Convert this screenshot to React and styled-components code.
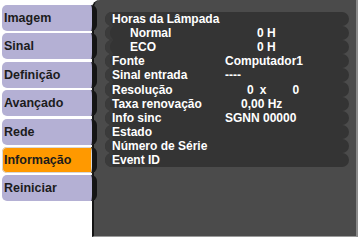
import React from 'react'
import styled, {createGlobalStyle} from 'styled-components'

const GlobalStyle = createGlobalStyle`
  html, body {
    margin: 0;
    padding: 0;
    background: #ffffff;
  }
  body {
    font-family: "Liberation Sans", Arial, sans-serif;
  }
`

const tabs = ['Imagem', 'Sinal', 'Definição', 'Avançado', 'Rede', 'Informação', 'Reiniciar']

const rows = [
  {label: 'Horas da Lâmpada'},
  {label: 'Normal', sub: true, value: '0 H', pad: 32},
  {label: 'ECO', sub: true, value: '0 H', pad: 32},
  {label: 'Fonte', value: 'Computador1'},
  {label: 'Sinal entrada', value: '----'},
  {label: 'Resolução', res: true},
  {label: 'Taxa renovação', value: '0,00 Hz', pad: 16},
  {label: 'Info sinc', value: 'SGNN 00000'},
  {label: 'Estado'},
  {label: 'Número de Série'},
  {label: 'Event ID'},
]

export default function App(){
  return(
    <Screen>
      <GlobalStyle/>
      <TabColumn>
        {tabs.map(t => (
          <Tab key={t} active={t === 'Informação'}>{t}</Tab>
        ))}
      </TabColumn>
      <Panel>
        <InfoList>
          {rows.map(r => (
            <InfoRow key={r.label}>
              <Label sub={r.sub}>{r.label}</Label>
              {r.res ? (
                <Value>
                  <ResPart gap={22}>0</ResPart>
                  <ResPart gap={6}>x</ResPart>
                  <ResPart gap={26}>0</ResPart>
                </Value>
              ) : (
                <Value pad={r.pad}>{r.value}</Value>
              )}
            </InfoRow>
          ))}
        </InfoList>
      </Panel>
    </Screen>
  )
}

const Screen = styled.div`
  display: flex;
  width: 360px;
  height: 240px;
  background: #ffffff;
`

const TabColumn = styled.div`
  display: flex;
  flex-direction: column;
  gap: 2.4px;
  width: 95px;
  padding: 5px 0 0 2px;
  margin-right: -5px;
  position: relative;
  z-index: 1;
`

const Tab = styled.div`
  height: 26px;
  box-sizing: border-box;
  display: flex;
  align-items: center;
  padding-left: 2px;
  font-size: 12.5px;
  font-weight: bold;
  color: #1c1c1c;
  background: ${p => p.active ? '#ff9900' : '#b4b0d4'};
  border-radius: 5px 6px 6px 5px;
  border-right: 5px solid #151515;
  box-shadow: ${p => p.active ? 'inset 0 0 0 1px #d8d8d8' : 'none'};
`

const Panel = styled.div`
  width: 266px;
  height: 237px;
  box-sizing: border-box;
  background: #4b4b4b;
  border-left: 2px solid #141414;
  border-right: 2px solid #8a8a8a;
  border-bottom: 1px solid #9a9a9a;
  border-radius: 8px 0 0 0;
  padding: 12px 7px 0 11px;
`

const InfoList = styled.div`
  display: flex;
  flex-direction: column;
`

const InfoRow = styled.div`
  display: flex;
  align-items: center;
  height: 14.1px;
  background: #343434;
  border-radius: 7px;
  box-shadow: inset 7px 0 0 -2px #3b3b3b;
`

const Label = styled.div`
  width: 120px;
  padding-left: ${p => p.sub ? '25px' : '7px'};
  box-sizing: border-box;
  font-size: 12px;
  font-weight: bold;
  color: #ffffff;
  white-space: nowrap;
`

const Value = styled.div`
  display: flex;
  padding-left: ${p => p.pad || 0}px;
  font-size: 12px;
  font-weight: bold;
  color: #ffffff;
  white-space: nowrap;
`

const ResPart = styled.span`
  margin-left: ${p => p.gap}px;
`
